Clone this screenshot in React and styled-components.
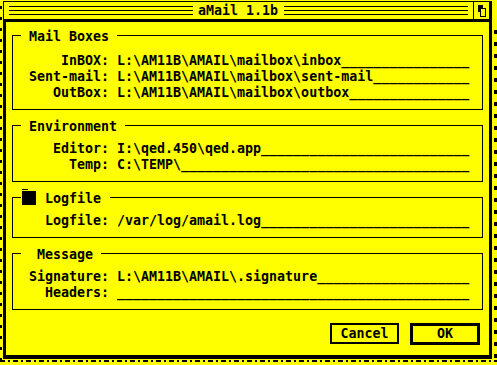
import React from 'react';
import styled, { createGlobalStyle } from 'styled-components';

const GlobalStyle = createGlobalStyle`
  html, body {
    margin: 0;
    padding: 0;
    background: #ffff00;
  }
  body {
    font-family: 'DejaVu Sans Mono', 'Liberation Mono', monospace;
    font-weight: bold;
    font-size: 13.3px;
    color: #000;
  }
`;

const Desktop = styled.div`
  width: 497px;
  height: 365px;
  overflow: hidden;
  background:
    repeating-linear-gradient(to bottom, #000 0 3px, transparent 3px 11px) 0 6px / 2px 100% no-repeat,
    repeating-linear-gradient(to bottom, #000 0 4px, transparent 4px 12px) 494px 30px / 3px 100% no-repeat,
    repeating-linear-gradient(to right, #000 0 5px, transparent 5px 8px, #000 8px 10px, transparent 10px 13px) 0 360px / 100% 2px no-repeat,
    #ffff00;
`;

const Window = styled.div`
  box-sizing: border-box;
  width: 489px;
  margin: 1px 0 0 3px;
  border-left: 1px solid #000;
  border-top: 1px solid #000;
  border-right: 3px solid #000;
  border-bottom: 4px solid #000;
  background: #ffff00;
`;

const TitleBar = styled.div`
  display: flex;
  align-items: stretch;
  height: 17px;
  border-bottom: 1px solid #000;
`;

const TitleArea = styled.div`
  flex: 1;
  display: flex;
  align-items: center;
  padding: 0 5px;
`;

const Hatch = styled.div`
  flex: 1;
  height: 9px;
  background: repeating-linear-gradient(to bottom, #000 0 1px, transparent 1px 4px);
`;

const TitleText = styled.span`
  padding: 0 6px 0 5px;
  line-height: 16px;
  white-space: pre;
`;

const FullerBox = styled.div`
  width: 15px;
  border-left: 1px solid #000;
  display: flex;
  align-items: center;
  justify-content: center;
`;

const Dialog = styled.div`
  display: flex;
  flex-direction: column;
  gap: 5px;
  border-left: 2px solid #000;
  border-top: 2px solid #000;
  padding: 3px 6px 10px 6px;
`;

const Group = styled.fieldset`
  margin: 0;
  min-width: 0;
  border: 1px solid #000;
  padding: ${(p) => p.$pt}px 0 8px 0;
`;

const Legend = styled.legend`
  margin-left: 8px;
  padding: 4px ${(p) => p.$pr ?? 8}px 0 ${(p) => p.$pl ?? 8}px;
  line-height: 16px;
  white-space: pre;
`;

const Check = styled.span`
  position: relative;
  display: inline-block;
  width: 14px;
  height: 14px;
  margin-right: 9px;
  vertical-align: -2px;
  background: #000;

  &::before {
    content: '';
    position: absolute;
    left: 0;
    top: -2px;
    width: 6px;
    height: 1px;
    background: #000;
  }
`;

const Row = styled.div`
  display: grid;
  grid-template-columns: 96px auto;
  column-gap: 8px;
  line-height: 16px;
  white-space: pre;
`;

const Label = styled.span`
  text-align: right;
`;

const ButtonRow = styled.div`
  display: flex;
  justify-content: flex-end;
  align-items: flex-start;
  gap: 11px;
  margin-top: 8px;
  padding-right: 3px;
`;

const Button = styled.button`
  box-sizing: border-box;
  width: ${(p) => (p.$default ? 70 : 69)}px;
  height: ${(p) => (p.$default ? 22 : 21)}px;
  padding: 0;
  border: ${(p) => (p.$default ? 3 : 2)}px solid #000;
  border-radius: 0;
  background: #ffff00;
  color: #000;
  font: inherit;
  line-height: 16px;
`;

const FIELD = 44;
const pad = (v) => v + '_'.repeat(FIELD - v.length);

const groups = [
  {
    title: 'Mail Boxes',
    pt: 8,
    rows: [
      ['InBOX:', 'L:\\AM11B\\AMAIL\\mailbox\\inbox'],
      ['Sent-mail:', 'L:\\AM11B\\AMAIL\\mailbox\\sent-mail'],
      ['OutBox:', 'L:\\AM11B\\AMAIL\\mailbox\\outbox'],
    ],
  },
  {
    title: 'Environment',
    pt: 6,
    rows: [
      ['Editor:', 'I:\\qed.450\\qed.app'],
      ['Temp:', 'C:\\TEMP\\'],
    ],
  },
  {
    title: 'Logfile',
    pt: 6,
    check: true,
    rows: [['Logfile:', '/var/log/amail.log']],
  },
  {
    title: 'Message',
    pt: 6,
    pl: 16,
    rows: [
      ['Signature:', 'L:\\AM11B\\AMAIL\\.signature'],
      ['Headers:', ''],
    ],
  },
];

const FullerIcon = () => (
  <svg width="15" height="17" viewBox="0 0 15 17" shapeRendering="crispEdges">
    <rect x="4" y="3" width="5" height="7" fill="#000" />
    <rect x="6.5" y="6.5" width="5" height="8" fill="#ffff00" stroke="#000" strokeWidth="1.5" />
  </svg>
);

export default function App() {
  return (
    <Desktop>
      <GlobalStyle />
      <Window>
        <TitleBar>
          <TitleArea>
            <Hatch />
            <TitleText>aMail 1.1b</TitleText>
            <Hatch />
          </TitleArea>
          <FullerBox>
            <FullerIcon />
          </FullerBox>
        </TitleBar>
        <Dialog>
          {groups.map((g) => (
            <Group key={g.title} $pt={g.pt}>
              <Legend $pl={g.check ? 1 : g.pl} $pr={g.check ? 9 : undefined}>
                {g.check && <Check />}
                {g.title}
              </Legend>
              {g.rows.map(([label, value]) => (
                <Row key={label}>
                  <Label>{label}</Label>
                  <span>{pad(value)}</span>
                </Row>
              ))}
            </Group>
          ))}
          <ButtonRow>
            <Button>Cancel</Button>
            <Button $default>OK</Button>
          </ButtonRow>
        </Dialog>
      </Window>
    </Desktop>
  );
}
